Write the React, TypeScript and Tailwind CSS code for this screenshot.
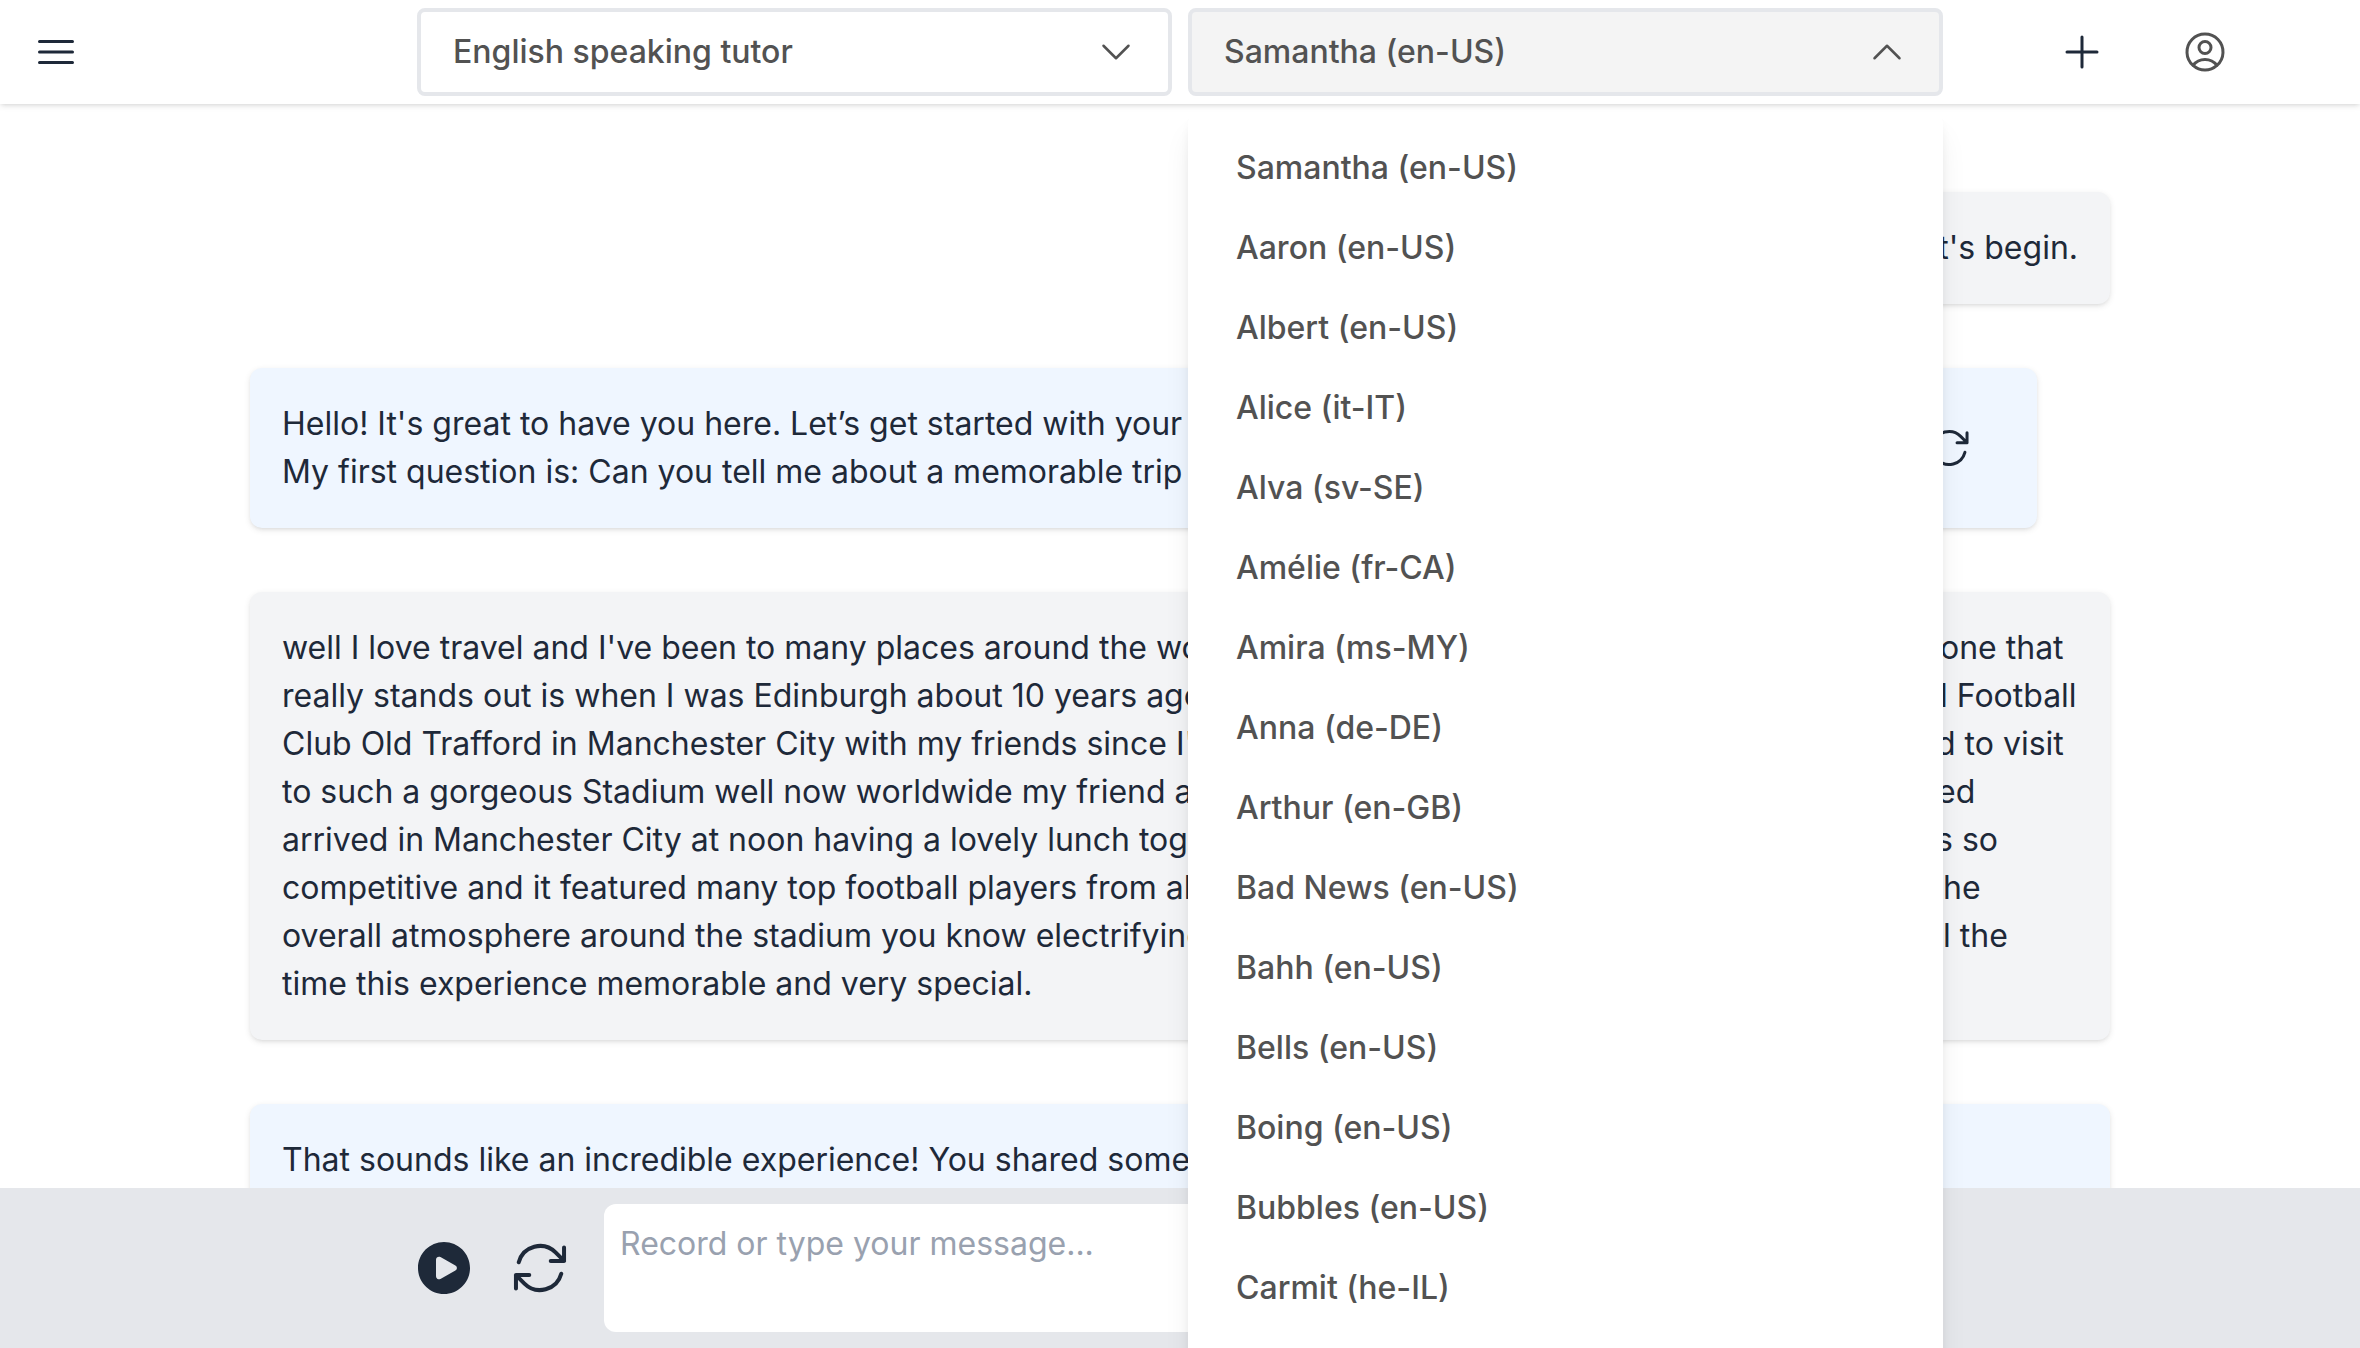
import { useState } from 'react'
import type { ReactNode } from 'react'
import {
  HiBars3,
  HiOutlinePlus,
  HiOutlineUserCircle,
  HiOutlineArrowPath,
  HiOutlineChevronDown,
  HiPlayCircle,
} from 'react-icons/hi2'

const voices = [
  'Samantha (en-US)',
  'Aaron (en-US)',
  'Albert (en-US)',
  'Alice (it-IT)',
  'Alva (sv-SE)',
  'Amélie (fr-CA)',
  'Amira (ms-MY)',
  'Anna (de-DE)',
  'Arthur (en-GB)',
  'Bad News (en-US)',
  'Bahh (en-US)',
  'Bells (en-US)',
  'Boing (en-US)',
  'Bubbles (en-US)',
  'Carmit (he-IL)',
]

const story = [
  { start: "well I love travel and I've been to many places around the world", end: 'one that', width: 'w-[1658px]' },
  { start: 'really stands out is when I was Edinburgh about 10 years ago', end: 'l Football', width: 'w-[1658px]' },
  { start: "Club Old Trafford in Manchester City with my friends since I'm", end: 'd to visit', width: 'w-[1654px]' },
  { start: 'to such a gorgeous Stadium well now worldwide my friend and', end: 'ed', width: 'w-[1655px]' },
  { start: 'arrived in Manchester City at noon having a lovely lunch together', end: 's so', width: 'w-[1654px]' },
  { start: 'competitive and it featured many top football players from all', end: 'he', width: 'w-[1661px]' },
  { start: 'overall atmosphere around the stadium you know electrifying', end: 'l the', width: 'w-[1661px]' },
  { start: 'time this experience memorable and very special.', end: '', width: 'w-[1655px]' },
]

function Bubble({ tone, children }: { tone: string; children: ReactNode }) {
  return (
    <div
      className={`rounded-xl p-8 shadow-[0_2px_6px_rgba(0,0,0,0.1),0_2px_4px_-2px_rgba(0,0,0,0.1)] ${tone}`}
    >
      {children}
    </div>
  )
}

export default function App() {
  const [open, setOpen] = useState(true)
  return (
    <div className="flex h-[1348px] w-[2360px] flex-col overflow-hidden bg-white font-['Inter',sans-serif] text-[32px] leading-[48px] text-gray-800">
      <header className="relative z-20 flex h-[104px] shrink-0 items-center bg-white shadow-[0_2px_6px_rgba(0,0,0,0.1),0_2px_4px_-2px_rgba(0,0,0,0.1)]">
        <button className="ml-8 mr-[337px] size-12">
          <HiBars3 className="size-12" />
        </button>
        <div className="grid w-[1526px] grid-cols-2 gap-4 font-medium text-[#525252]">
          <button className="flex h-[88px] items-center justify-between rounded-lg border-4 border-gray-200 px-8">
            English speaking tutor
            <HiOutlineChevronDown className="size-10" />
          </button>
          <div className="relative">
            <button
              onClick={() => setOpen(!open)}
              className="flex h-[88px] w-full items-center justify-between rounded-lg border-4 border-gray-200 bg-[#f4f4f4] px-8"
            >
              Samantha (en-US)
              <HiOutlineChevronDown className="size-10 rotate-180" />
            </button>
            {open && (
              <ul className="absolute left-0 top-[104px] h-[1300px] w-full rounded-xl bg-white py-4 shadow-[0_20px_30px_-6px_rgba(0,0,0,0.1),0_8px_12px_-4px_rgba(0,0,0,0.1)]">
                {voices.map((v) => (
                  <li key={v} className="px-12 py-4">
                    {v}
                  </li>
                ))}
              </ul>
            )}
          </div>
        </div>
        <button className="ml-[115px] size-12">
          <HiOutlinePlus className="size-12" />
        </button>
        <button className="ml-[75px] size-12 text-[#525252]">
          <HiOutlineUserCircle className="size-12" />
        </button>
      </header>

      <main className="mx-auto flex min-h-0 w-[1860px] flex-1 flex-col items-start gap-16 pt-[88px]">
        <div className="self-end">
          <Bubble tone="bg-gray-100">Let's begin.</Bubble>
        </div>
        <Bubble tone="flex w-[1787px] items-center justify-between bg-[#eff6ff]">
          <p>
            Hello! It's great to have you here. Let’s get started with your
            <br />
            My first question is: Can you tell me about a memorable trip
          </p>
          <HiOutlineArrowPath className="mr-8 size-12" />
        </Bubble>
        <Bubble tone="w-full bg-gray-100">
          {story.map(({ start, end, width }) => (
            <div key={start} className="flex h-12 whitespace-nowrap">
              <span className={`shrink-0 ${width}`}>{start}</span>
              <span>{end}</span>
            </div>
          ))}
        </Bubble>
        <Bubble tone="w-full bg-[#eff6ff]">
          That sounds like an incredible experience! You shared some
        </Bubble>
      </main>

      <footer className="relative z-10 flex h-[160px] shrink-0 items-center bg-gray-200 pl-[412px]">
        <HiPlayCircle className="size-16" />
        <HiOutlineArrowPath className="ml-8 size-16" />
        <textarea
          placeholder="Record or type your message..."
          className="ml-8 h-32 w-[1100px] resize-none rounded-xl bg-white px-4 py-4 placeholder:text-gray-400"
        />
      </footer>
    </div>
  )
}
